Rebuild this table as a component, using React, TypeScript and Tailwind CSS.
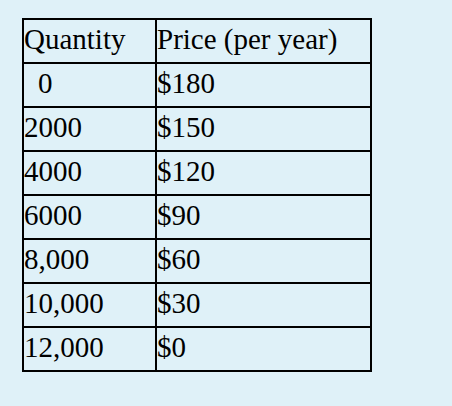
import React from "react";

const rows: [string, string, boolean?][] = [
  ["Quantity", "Price (per year)"],
  ["0", "$180", true],
  ["2000", "$150"],
  ["4000", "$120"],
  ["6000", "$90"],
  ["8,000", "$60"],
  ["10,000", "$30"],
  ["12,000", "$0"],
];

export default function App() {
  return (
    <div
      className="w-[452px] h-[406px] bg-[#dff1f8] pl-[22px] pt-[18px]"
      style={{ fontFamily: '"Liberation Serif", "Times New Roman", serif' }}
    >
      <div className="inline-grid grid-cols-[131px_213px] gap-[2px] bg-black p-[2px] text-[29px] leading-[38px] text-black">
        {rows.map(([q, p, indent], i) => (
          <React.Fragment key={i}>
            <div className={`h-[42px] bg-[#dff1f8] whitespace-nowrap ${indent ? "pl-[14px]" : ""}`}>{q}</div>
            <div className="h-[42px] bg-[#dff1f8] whitespace-nowrap">{p}</div>
          </React.Fragment>
        ))}
      </div>
    </div>
  );
}
